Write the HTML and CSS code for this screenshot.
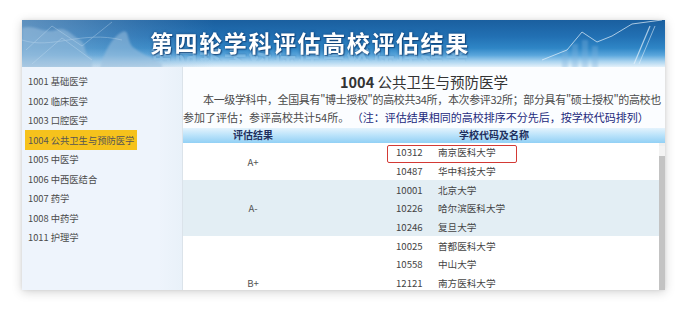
FILE: index.html
```html
<!DOCTYPE html>
<html lang="zh-CN">
<head>
<meta charset="utf-8">
<title>第四轮学科评估高校评估结果</title>
<link rel="stylesheet" href="styles.css">
</head>
<body>
<div class="page">
  <div class="card">
    <header class="banner">
      <svg class="deco" width="643" height="48" viewBox="0 0 643 48" aria-hidden="true">
        <defs>
          <filter id="blur1"><feGaussianBlur stdDeviation="1.2"/></filter>
        </defs>
        <g filter="url(#blur1)" fill="#9cc0de" opacity="0.55">
          <path d="M0 8 C12 4 22 14 34 10 C44 6 50 16 58 20 C66 26 60 34 70 38 L70 48 L0 48 Z"/>
          <path d="M80 40 C86 26 90 18 100 12 C108 8 104 22 112 28 C120 34 130 38 140 44 L140 48 L78 48 Z"/>
        </g>
        <g stroke="#c9dff0" stroke-width="0.7" fill="none" opacity="0.5">
          <path d="M4 30 L30 6 L60 26 L90 2"/>
          <path d="M10 44 L40 18 L70 40"/>
          <path d="M0 20 C30 30 60 10 100 20"/>
        </g>
        <g fill="#7fb3de" opacity="0.35" filter="url(#blur1)">
          <rect x="540" y="30" width="6" height="18"/>
          <rect x="550" y="24" width="6" height="24"/>
          <rect x="560" y="20" width="6" height="28"/>
          <rect x="570" y="26" width="6" height="22"/>
        </g>
        <g stroke="#e6f2fb" fill="none" opacity="0.7">
          <polyline points="520,40 545,30 560,12 575,22 590,16 610,4 640,0" stroke-width="1"/>
          <line x1="612" y1="44" x2="628" y2="6" stroke-width="1.2"/>
          <line x1="617" y1="44" x2="633" y2="6" stroke-width="0.8"/>
        </g>
      </svg>
      <h1 class="banner-title">第四轮学科评估高校评估结果</h1>
    </header>
    <div class="body">
      <nav class="side">
        <div class="side-item">1001 基础医学</div>
        <div class="side-item">1002 临床医学</div>
        <div class="side-item">1003 口腔医学</div>
        <div class="side-item side-item-active"><span class="active">1004 公共卫生与预防医学</span></div>
        <div class="side-item">1005 中医学</div>
        <div class="side-item">1006 中西医结合</div>
        <div class="side-item">1007 药学</div>
        <div class="side-item">1008 中药学</div>
        <div class="side-item">1011 护理学</div>
      </nav>
      <main class="main">
        <h2 class="title"><b>1004</b> 公共卫生与预防医学</h2>
        <p class="desc desc-1">本一级学科中，全国具有"博士授权"的高校共34所，本次参评32所；部分具有"硕士授权"的高校也</p>
        <p class="desc">参加了评估；参评高校共计54所。 <span class="note">（注：评估结果相同的高校排序不分先后，按学校代码排列）</span></p>
        <div class="thead">
          <div class="th th-grade">评估结果</div>
          <div class="th th-school">学校代码及名称</div>
        </div>
        <div class="scroll">
          <div class="rows">
            <div class="group">
              <div class="grade">A+</div>
              <div class="schools">
                <div class="school"><span class="code">10312</span><span class="name">南京医科大学</span></div>
                <div class="school"><span class="code">10487</span><span class="name">华中科技大学</span></div>
              </div>
            </div>
            <div class="group tinted">
              <div class="grade">A-</div>
              <div class="schools">
                <div class="school"><span class="code">10001</span><span class="name">北京大学</span></div>
                <div class="school"><span class="code">10226</span><span class="name">哈尔滨医科大学</span></div>
                <div class="school"><span class="code">10246</span><span class="name">复旦大学</span></div>
              </div>
            </div>
            <div class="group">
              <div class="grade">B+</div>
              <div class="schools">
                <div class="school"><span class="code">10025</span><span class="name">首都医科大学</span></div>
                <div class="school"><span class="code">10558</span><span class="name">中山大学</span></div>
                <div class="school"><span class="code">12121</span><span class="name">南方医科大学</span></div>
                <div class="school"></div>
                <div class="school"></div>
              </div>
            </div>
            <div class="highlight-box"></div>
          </div>
          <div class="scrollbar">
            <div class="sb-arrow"></div>
            <div class="sb-thumb"></div>
          </div>
        </div>
      </main>
    </div>
  </div>
</div>
</body>
</html>
```

FILE: styles.css
```css
* { box-sizing: border-box; }
html, body {
  margin: 0;
  padding: 0;
  background: #ffffff;
  font-family: "Noto Sans CJK SC", "Noto Sans", sans-serif;
  color: #444;
}
.page {
  width: 688px;
  height: 311px;
  padding: 20px 23px 21px 22px;
  overflow: hidden;
}
.card {
  width: 643px;
  height: 270px;
  display: flex;
  flex-direction: column;
  background: #fff;
  box-shadow: 0 2px 10px rgba(0,0,0,0.18), 0 0 3px rgba(0,0,0,0.08);
  overflow: hidden;
}
.banner {
  position: relative;
  height: 47px;
  flex: none;
  background:
    linear-gradient(90deg, rgba(150,185,215,0.55) 0%, rgba(120,165,205,0.25) 18%, rgba(0,0,0,0) 30%),
    linear-gradient(180deg, #1a5f9f 0%, #2270b3 35%, #2f86c6 60%, #5aa6dc 75%, #a9d3ef 88%, #e4f1fa 100%);
  display: flex;
  align-items: center;
  overflow: hidden;
}
.deco {
  position: absolute;
  left: 0;
  top: 0;
}
.banner-title {
  position: relative;
  margin: 0 0 4px 128px;
  font-size: 23px;
  font-weight: 700;
  letter-spacing: 1.6px;
  color: #ffffff;
  line-height: 26px;
  text-shadow: 0 0 3px rgba(10,50,100,0.7), 1px 1px 1px rgba(10,50,100,0.6);
  -webkit-box-reflect: below -7px linear-gradient(transparent 45%, rgba(255,255,255,0.35));
}
.body {
  flex: 1;
  display: flex;
  min-height: 0;
}
.side {
  width: 161px;
  flex: none;
  background: linear-gradient(90deg, #eef4fc 0%, #eef4fc 85%, #e9f1f9 100%);
  border-right: 1px solid #dbe3ea;
  padding-top: 4.5px;
}
.side-item {
  height: 19.5px;
  display: flex;
  align-items: center;
  padding-left: 6px;
  font-size: 9.3px;
  color: #4a4a4a;
  white-space: nowrap;
}
.side-item-active { padding-left: 3px; }
.active {
  background: #f6c21c;
  padding: 0 3px;
  height: 20px;
  line-height: 20px;
  display: inline-block;
  color: #555;
}
.main {
  flex: 1;
  min-width: 0;
  display: flex;
  flex-direction: column;
  background: #fbfdff;
}
.title {
  margin: 4px 0 0;
  text-align: center;
  font-size: 14.5px;
  line-height: 22px;
  font-weight: 400;
  color: #333;
}
.title b { font-weight: 700; }
.desc {
  margin: 0;
  font-size: 11px;
  line-height: 17.5px;
  color: #4a4a4a;
  white-space: nowrap;
  overflow: hidden;
}
.desc-1 { margin-top: -2px; text-indent: 20px; letter-spacing: -0.35px; }
.note { color: #232a7c; }
.thead {
  margin-top: 2px;
  height: 15px;
  flex: none;
  display: flex;
  background: linear-gradient(180deg, #e4f3fd 0%, #b9e2fa 50%, #92d0f5 100%);
  overflow: hidden;
}
.th {
  font-size: 10px;
  font-weight: 700;
  color: #1f2f5e;
  line-height: 14px;
  text-align: center;
}
.th-grade { width: 140px; }
.th-school { flex: 1; }
.scroll {
  flex: 1;
  min-height: 0;
  display: flex;
  overflow: hidden;
  background: #fff;
}
.rows {
  position: relative;
  flex: 1;
  min-width: 0;
}
.group {
  display: flex;
}
.group.tinted { background: #e3eef4; }
.grade {
  width: 140px;
  flex: none;
  display: flex;
  align-items: center;
  justify-content: center;
  font-size: 9.6px;
  color: #555;
}
.schools { flex: 1; }
.school {
  height: 18.7px;
  display: flex;
  align-items: center;
  padding-left: 73px;
  font-size: 9.6px;
  color: #444;
}
.code { width: 42px; }
.highlight-box {
  position: absolute;
  left: 204px;
  top: 2px;
  width: 130px;
  height: 18px;
  border: 1.5px solid #d33a35;
  border-radius: 2px;
}
.scrollbar {
  width: 6px;
  flex: none;
  background: #efefef;
  display: flex;
  flex-direction: column;
  padding-top: 3px;
}
.sb-arrow {
  height: 10px;
  flex: none;
  background: #f3f3f3;
}
.sb-thumb {
  flex: 1;
  background: #c3c3c3;
}
```
